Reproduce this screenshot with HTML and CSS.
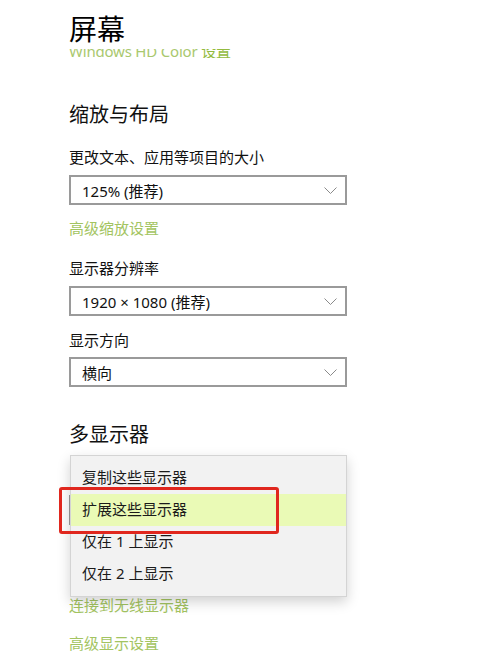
FILE: index.html
```html
<!DOCTYPE html>
<html lang="zh-CN">
<head>
<meta charset="utf-8">
<title>屏幕</title>
<link rel="stylesheet" href="styles.css">
</head>
<body>
<div class="page">
  <h1 class="title">屏幕</h1>
  <div class="clip"><div class="clip-inner"><span class="muted">Windows HD Color</span> <span class="ulink">设置</span></div></div>

  <h2 class="heading h-scale">缩放与布局</h2>
  <div class="label l-size">更改文本、应用等项目的大小</div>
  <div class="select s1"><span>125% (推荐)</span><svg class="chev" width="13" height="7" viewBox="0 0 13 7"><path d="M0.5 0.5 L6.5 6.5 L12.5 0.5" fill="none" stroke="#8a8a8a" stroke-width="1"/></svg></div>
  <div class="link l-adv">高级缩放设置</div>

  <div class="label l-res">显示器分辨率</div>
  <div class="select s2"><span>1920 × 1080 (推荐)</span><svg class="chev" width="13" height="7" viewBox="0 0 13 7"><path d="M0.5 0.5 L6.5 6.5 L12.5 0.5" fill="none" stroke="#8a8a8a" stroke-width="1"/></svg></div>

  <div class="label l-ori">显示方向</div>
  <div class="select s3"><span>横向</span><svg class="chev" width="13" height="7" viewBox="0 0 13 7"><path d="M0.5 0.5 L6.5 6.5 L12.5 0.5" fill="none" stroke="#8a8a8a" stroke-width="1"/></svg></div>

  <h2 class="heading h-multi">多显示器</h2>
  <div class="multi">
    <div class="select s4"><span>扩展这些显示器</span></div>
    <div class="menu">
      <div class="item">复制这些显示器</div>
      <div class="item selected">扩展这些显示器</div>
      <div class="item">仅在 1 上显示</div>
      <div class="item">仅在 2 上显示</div>
    </div>
    <div class="mark"></div>
  </div>
  <div class="link l-wire">连接到无线显示器</div>
  <div class="link l-disp">高级显示设置</div>
</div>
</body>
</html>
```
FILE: styles.css
```css
html, body {
  margin: 0;
  padding: 0;
  background: #ffffff;
}
body {
  font-family: "Noto Sans", "Noto Sans CJK SC", sans-serif;
  color: #111111;
  width: 500px;
  height: 667px;
  overflow: hidden;
}
.page {
  padding: 12px 0 0 69px;
  display: flex;
  flex-direction: column;
  align-items: flex-start;
}
.title {
  margin: 0;
  font-size: 28px;
  font-weight: 400;
  line-height: 34px;
  color: #000;
}
.clip {
  margin-top: 3px;
  height: 9px;
  overflow: hidden;
}
.clip-inner {
  margin-top: -8px;
  font-size: 15px;
  line-height: 20px;
  white-space: nowrap;
  letter-spacing: -0.2px;
}
.muted { color: #a9c86e; }
.ulink { color: #93bb3e; text-decoration: underline; }

.heading {
  margin: 0;
  font-size: 20px;
  font-weight: 400;
  line-height: 28px;
  color: #111;
}
.h-scale { margin-top: 43px; }
.h-multi { margin-top: 34px; }

.label {
  font-size: 15px;
  line-height: 22px;
  color: #111;
}
.l-size { margin-top: 17px; }
.l-res { margin-top: 18px; }
.l-ori { margin-top: 13px; }

.select {
  box-sizing: border-box;
  width: 278px;
  height: 30px;
  border: 2px solid #9a9a9a;
  background: #fff;
  display: flex;
  align-items: center;
  justify-content: space-between;
  padding: 0 8px 0 11px;
  font-size: 15px;
  color: #111;
}
.chev { margin-top: 1px; }
.s1 { margin-top: 7px; }
.s2 { margin-top: 7px; }
.s3 { margin-top: 6px; }
.s4 { margin-top: 46px; }

.link {
  font-size: 15px;
  line-height: 22px;
  color: #a3c461;
}
.l-adv { margin-top: 12px; }
.l-wire { margin-top: 69px; }
.l-disp { margin-top: 16px; }

.multi {
  position: relative;
  width: 278px;
}
.menu {
  position: absolute;
  left: 1px;
  top: 6px;
  box-sizing: border-box;
  width: 277px;
  height: 142px;
  padding: 6px 0;
  background: #f2f2f2;
  border: 1px solid #d4d4d4;
  box-shadow: 0 5px 12px rgba(0, 0, 0, 0.18);
}
.item {
  height: 32px;
  line-height: 31px;
  padding-left: 11px;
  font-size: 15px;
  color: #1a1a1a;
}
.item.selected {
  background: #eafab6;
}
.mark {
  position: absolute;
  left: -10px;
  top: 38px;
  box-sizing: border-box;
  width: 220px;
  height: 47px;
  border: 3px solid #e0271e;
  border-radius: 3px;
}
```
